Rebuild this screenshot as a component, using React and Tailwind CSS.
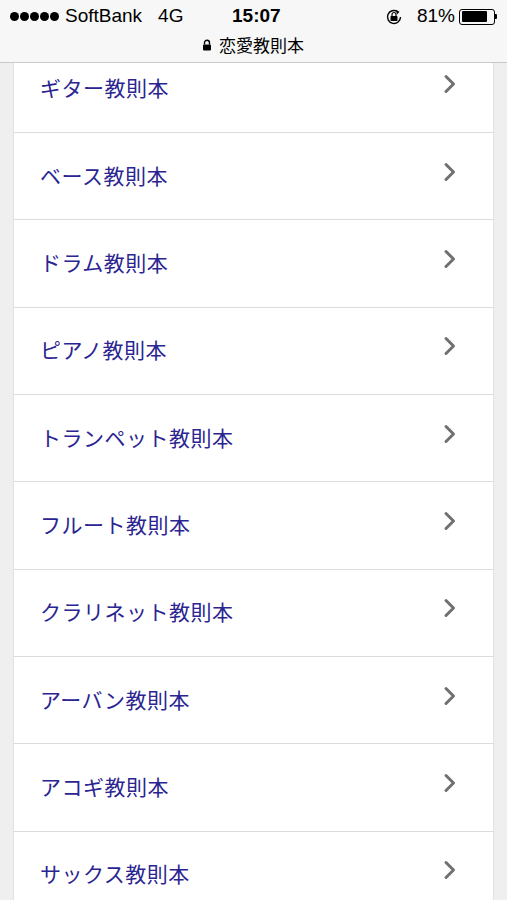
import React from 'react';

const items = [
  'ギター教則本',
  'ベース教則本',
  'ドラム教則本',
  'ピアノ教則本',
  'トランペット教則本',
  'フルート教則本',
  'クラリネット教則本',
  'アーバン教則本',
  'アコギ教則本',
  'サックス教則本',
];

const Chevron = () => (
  <svg width="14" height="20" viewBox="0 0 14 20" className="-mt-[9px]">
    <path d="M3 2.5 L10.5 10 L3 17.5" fill="none" stroke="#707070" strokeWidth="3" strokeLinecap="round" strokeLinejoin="round" />
  </svg>
);

const StatusBar = () => (
  <div className="h-[63px] bg-[#f7f7f7] border-b border-[#c9c9c9] flex flex-col text-black">
    <div className="h-[33px] flex items-center px-[10px] text-[19px] relative" style={{ fontFamily: '"Liberation Sans", Arial, sans-serif' }}>
      <div className="flex items-center gap-[1px]">
        {[0, 1, 2, 3, 4].map((i) => (
          <span key={i} className="w-[9px] h-[9px] rounded-full bg-black" />
        ))}
      </div>
      <span className="ml-[6px]">SoftBank</span>
      <span className="ml-[16px]">4G</span>
      <span className="absolute left-[232px] font-bold">15:07</span>
      <div className="ml-auto flex items-center">
        <svg width="18" height="18" viewBox="0 0 18 18">
          <path d="M15.5 9 A6.5 6.5 0 1 1 12.5 3.5" fill="none" stroke="black" strokeWidth="1.4" />
          <path d="M11 2 L14.5 3.8 L12 6.5 Z" fill="black" />
          <rect x="5.5" y="8" width="7" height="5" rx="0.8" fill="black" />
          <path d="M7 8 V6.5 A2 2 0 0 1 11 6.5 V8" fill="none" stroke="black" strokeWidth="1.2" />
        </svg>
        <span className="ml-[14px]">81%</span>
        <div className="ml-[4px] flex items-center">
          <div className="w-[36px] h-[16px] border border-black rounded-[3px] p-[1.5px]">
            <div className="h-full w-[81%] bg-black rounded-[1px]" />
          </div>
          <div className="w-[2px] h-[5px] bg-black rounded-r-[1px]" />
        </div>
      </div>
    </div>
    <div className="flex-1 flex items-center justify-center gap-[7px] pb-[6px] pr-[1px] text-[17px] leading-none" style={{ fontFamily: '"Noto Sans CJK JP", "Liberation Sans", sans-serif' }}>
      <svg width="10" height="12" viewBox="0 0 10 12">
        <path d="M2.5 5.5 V3.8 A2.5 2.5 0 0 1 7.5 3.8 V5.5" fill="none" stroke="black" strokeWidth="1.4" />
        <rect x="1" y="5.5" width="8" height="6" rx="1" fill="black" />
      </svg>
      <span>恋愛教則本</span>
    </div>
  </div>
);

export default function App() {
  return (
    <div className="w-[507px] h-[900px] overflow-hidden bg-[#efefef] flex flex-col">
      <StatusBar />
      <div className="flex-1 overflow-hidden px-[13px]">
        <div className="-mt-[17.33px] bg-white border-x border-[#e2e2e2]">
          {items.map((label) => (
            <div key={label} className="h-[87.33px] border-b border-[#dcdcdc] flex items-center pl-[26px] pr-[36px]">
              <span className="flex-1 text-[21px] leading-none -mt-[2px] text-[#2b2591] tracking-[0.5px]" style={{ fontFamily: '"Noto Sans CJK JP", "Liberation Sans", sans-serif' }}>
                {label}
              </span>
              <Chevron />
            </div>
          ))}
        </div>
      </div>
    </div>
  );
}
